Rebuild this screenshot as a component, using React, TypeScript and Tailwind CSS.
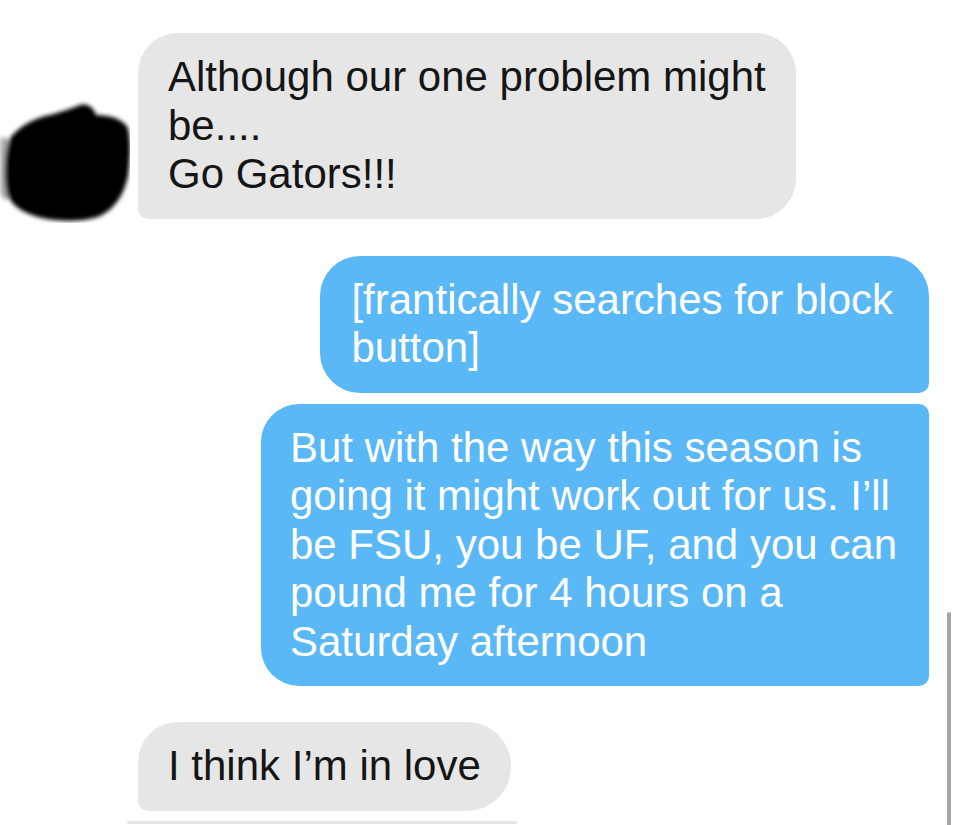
export default function App() {
  return (
    <div className="relative h-[825px] w-[960px] overflow-hidden bg-white font-['Liberation_Sans',Arial,sans-serif] text-[42px] leading-[48.5px]">
      <div className="flex flex-col pt-[33px] pr-[31px]">
        {/* received, with scribbled-out avatar */}
        <div className="flex items-end gap-2">
          <svg width="130" height="125" viewBox="0 0 130 125" className="-mb-1 shrink-0">
            <defs>
              <filter id="smear" x="-10%" y="-10%" width="120%" height="120%">
                <feGaussianBlur stdDeviation="2" />
              </filter>
            </defs>
            <g filter="url(#smear)">
              <path d="M0 42 C4 36 10 40 12 52 L12 100 C6 104 0 100 0 92 Z" fill="#8e8e8e" opacity="0.75" />
              <path
                d="M10 40 C20 28 34 20 50 17 C62 14 72 10 80 7 C88 5 94 10 96 17 C108 17 122 20 128 30 C131 45 130 62 128 78 C124 96 116 110 100 118 C84 124 60 124 42 120 C26 116 14 110 8 98 C4 84 4 58 10 40 Z"
                fill="#050505"
              />
            </g>
          </svg>
          <div className="w-fit rounded-[40px] rounded-bl-[10px] bg-[#e6e6e6] px-[30px] py-5 text-[#151515]">
            Although our one problem might
            <br />
            be....
            <br />
            Go Gators!!!
          </div>
        </div>

        {/* sent */}
        <div className="mt-[37px] flex flex-col items-end gap-[11px]">
          <div className="w-fit rounded-[40px] rounded-br-[10px] bg-[#5ab8f7] pl-[31px] pr-[36px] py-5 text-white">
            [frantically searches for block
            <br />
            button]
          </div>
          <div className="w-fit rounded-[38px] rounded-tr-[10px] rounded-br-[10px] bg-[#5ab8f7] pl-[29px] pr-[32px] py-5 text-white">
            But with the way this season is
            <br />
            going it might work out for us. I’ll
            <br />
            be FSU, you be UF, and you can
            <br />
            pound me for 4 hours on a
            <br />
            Saturday afternoon
          </div>
        </div>

        {/* received */}
        <div className="mt-[36px] pl-[138px]">
          <div className="w-fit rounded-[44px] rounded-tl-[40px] rounded-bl-[10px] bg-[#e6e6e6] px-[30px] py-5 text-[#151515]">
            I think I’m in love
          </div>
        </div>

        <div className="ml-[127px] mt-[10px] h-[3px] w-[390px] rounded-full bg-[#e4e4e4]" />
      </div>

      {/* scroll indicator */}
      <div className="absolute left-[947px] top-[612px] h-[230px] w-[4px] rounded-full bg-[#a6a6a6]" />
    </div>
  );
}
